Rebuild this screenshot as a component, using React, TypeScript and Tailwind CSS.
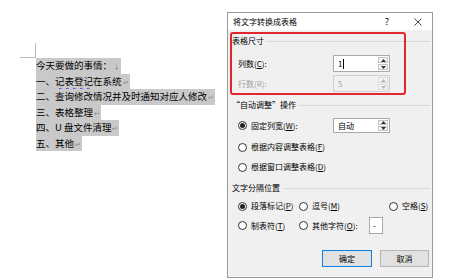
import React from "react";

const cjk = { fontFamily: '"Noto Sans CJK SC", "Noto Sans", sans-serif' };

const lines = [
  { text: "今天要做的事情：", mark: "↓" },
  { text: "一、记表登记在系统", mark: "↵", wavy: true },
  { text: "二、查询修改情况并及时通知对应人修改", mark: "↵" },
  { text: "三、表格整理", mark: "↵" },
  { text: "四、U 盘文件清理", mark: "↵" },
  { text: "五、其他", mark: "↵" },
];

function Key({ label, k, tail = "" }: { label: string; k: string; tail?: string }) {
  return (
    <span>
      {label}(<span className="underline underline-offset-1">{k}</span>){tail}
    </span>
  );
}

function Radio({ on = false }: { on?: boolean }) {
  return (
    <span className="flex h-[9px] w-[9px] shrink-0 items-center justify-center rounded-full border border-[#333] bg-white">
      {on && <span className="h-[5px] w-[5px] rounded-full bg-[#222]" />}
    </span>
  );
}

function Spin({ value, disabled = false, cursor = false }: { value: string; disabled?: boolean; cursor?: boolean }) {
  const tri = disabled ? "#b8b8b8" : "#333";
  return (
    <div
      className={`flex h-full w-[57px] border ${disabled ? "border-[#cfcfcf] bg-[#f0f0f0] text-[#a8a8a8]" : "border-[#a9a9a9] bg-white text-black"}`}
    >
      <div className="flex flex-1 items-center pl-[4px]">
        {value}
        {cursor && <span className="ml-[1px] h-[10px] w-[1px] bg-black" />}
      </div>
      <div className="flex w-[11px] flex-col gap-[1px] py-[1px] pr-[1px]">
        <div className={`flex flex-1 items-center justify-center border ${disabled ? "border-[#dcdcdc]" : "border-[#c4c4c4]"} bg-[#f4f4f4]`}>
          <svg width="5" height="3" viewBox="0 0 5 3">
            <path d="M0 3 L2.5 0 L5 3 Z" fill={tri} />
          </svg>
        </div>
        <div className={`flex flex-1 items-center justify-center border ${disabled ? "border-[#dcdcdc]" : "border-[#c4c4c4]"} bg-[#f4f4f4]`}>
          <svg width="5" height="3" viewBox="0 0 5 3">
            <path d="M0 0 L2.5 3 L5 0 Z" fill={tri} />
          </svg>
        </div>
      </div>
    </div>
  );
}

function Heading({ children }: { children: React.ReactNode }) {
  return (
    <div className="flex h-[14px] items-center gap-[3px] pr-[2px]">
      <span className="whitespace-nowrap">{children}</span>
      <span className="h-px flex-1 bg-[#d7d7d7]" />
    </div>
  );
}

export default function App() {
  return (
    <div className="flex h-[278px] w-[461px] overflow-hidden bg-white" style={cjk}>
      {/* document */}
      <div className="w-[227px] shrink-0 pl-[20px] pt-[43px]">
        <div className="h-[15px] w-[16px] border-b border-r border-[#bdbdbd]" />
        <div className="ml-[16px] text-[9.5px] leading-[14.5px] text-black">
          {lines.map((l, i) => (
            <div key={i} className="flex">
              <span className="whitespace-nowrap bg-[#c9c9c9]">
                {l.wavy ? (
                  <>
                    一、
                    <span className="underline decoration-[#3a3ad0] decoration-wavy underline-offset-2">记表登记</span>
                    在系统
                  </>
                ) : (
                  l.text
                )}
                <span className="px-[1px] text-[7px] text-[#8a8a8a]">{l.mark}</span>
              </span>
            </div>
          ))}
        </div>
      </div>

      {/* dialog */}
      <div className="relative mt-[12px] flex h-[266px] w-[206px] shrink-0 flex-col border border-[#9b9b9b] bg-[#f0f0f0] text-[8px] text-black">
        <div className="flex h-[17px] shrink-0 items-center bg-white pl-[5px]">
          <span>将文字转换成表格</span>
          <span className="ml-auto w-[8px] text-center text-[9px]">?</span>
          <span className="ml-[22px] mr-[10px] flex w-[9px] items-center justify-center">
            <svg width="8" height="8" viewBox="0 0 8 8">
              <path d="M0.5 0.5 L7.5 7.5 M7.5 0.5 L0.5 7.5" stroke="#333" strokeWidth="0.9" />
            </svg>
          </span>
        </div>

        <div className="flex flex-1 flex-col pl-[4px]">
          <div className="mt-[4px]">
            <Heading>表格尺寸</Heading>
          </div>
          <div className="mt-[7px] flex h-[17px] items-center pl-[6px]">
            <span className="w-[95px]">
              <Key label="列数" k="C" tail=":" />
            </span>
            <Spin value="1" cursor />
          </div>
          <div className="mt-[3px] flex h-[17px] items-center pl-[6px] text-[#a0a0a0]">
            <span className="w-[95px]">行数(R):</span>
            <Spin value="5" disabled />
          </div>

          <div className="mt-[6px]">
            <Heading>“自动调整”操作</Heading>
          </div>
          <div className="mt-[6px] flex h-[15px] items-center pl-[6px]">
            <Radio on />
            <span className="ml-[4px] w-[82px]">
              <Key label="固定列宽" k="W" tail=":" />
            </span>
            <Spin value="自动" />
          </div>
          <div className="mt-[7px] flex h-[14px] items-center gap-[4px] pl-[6px]">
            <Radio />
            <Key label="根据内容调整表格" k="F" />
          </div>
          <div className="mt-[6px] flex h-[14px] items-center gap-[4px] pl-[6px]">
            <Radio />
            <Key label="根据窗口调整表格" k="D" />
          </div>

          <div className="mt-[7px]">
            <Heading>文字分隔位置</Heading>
          </div>
          <div className="mt-[4px] flex h-[14px] items-center pl-[6px]">
            <span className="flex w-[61px] items-center gap-[4px]">
              <Radio on />
              <Key label="段落标记" k="P" />
            </span>
            <span className="flex w-[90px] items-center gap-[4px]">
              <Radio />
              <Key label="逗号" k="M" />
            </span>
            <span className="flex items-center gap-[4px]">
              <Radio />
              <Key label="空格" k="S" />
            </span>
          </div>
          <div className="mt-[4px] flex h-[17px] items-center pl-[6px]">
            <span className="flex w-[61px] items-center gap-[4px]">
              <Radio />
              <Key label="制表符" k="T" />
            </span>
            <span className="flex w-[70px] items-center gap-[4px]">
              <Radio />
              <Key label="其他字符" k="O" tail=":" />
            </span>
            <span className="flex h-full w-[14px] items-center border border-[#a9a9a9] bg-white pl-[3px]">-</span>
          </div>

          <div className="mt-[16px] flex h-[17px] pl-[90px]">
            <button className="h-full w-[50px] border border-[#1a7fd4] bg-[#e1e1e1] text-[8px] shadow-[inset_0_0_0_1px_#cfe3f5]">
              确定
            </button>
            <button className="ml-[8px] h-full w-[49px] border border-[#b5b5b5] bg-[#e1e1e1] text-[8px]">取消</button>
          </div>
        </div>

        {/* annotation */}
        <div className="pointer-events-none absolute left-[2px] top-[19px] h-[63px] w-[176px] rounded-[3px] border-2 border-[#e2262d]" />
      </div>
    </div>
  );
}
